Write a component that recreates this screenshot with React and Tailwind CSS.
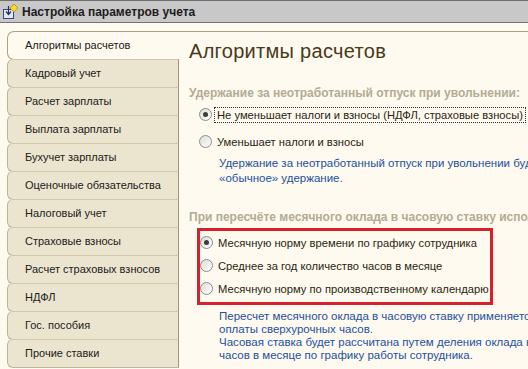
const TABS = [
  'Алгоритмы расчетов',
  'Кадровый учет',
  'Расчет зарплаты',
  'Выплата зарплаты',
  'Бухучет зарплаты',
  'Оценочные обязательства',
  'Налоговый учет',
  'Страховые взносы',
  'Расчет страховых взносов',
  'НДФЛ',
  'Гос. пособия',
  'Прочие ставки'
];

const Radio = ({ checked }) => (
  <span className="w-[13px] h-[13px] shrink-0 rounded-full border border-[#8c8c8c] bg-gradient-to-br from-[#dcdcd6] to-white flex items-center justify-center">
    {checked && <span className="w-[5px] h-[5px] rounded-full bg-[#3c3c3c]" />}
  </span>
);

const Option = ({ checked, focused, tall, children }) => (
  <div className={`flex items-center pl-[9px] ${tall ? 'h-[27px]' : 'h-[23px]'}`}>
    <Radio checked={checked} />
    <span
      className={`ml-[2px] pl-[2px] pr-[2px] text-[11.2px] leading-[14px] whitespace-nowrap text-[#2a2410] ${
        focused ? 'border border-dotted border-[#303030]' : 'border border-transparent'
      }`}
    >
      {children}
    </span>
  </div>
);

const TitleIcon = () => (
  <svg width="18" height="18" viewBox="0 0 18 18">
    <rect x="1.5" y="6.5" width="10" height="9" fill="#dfe8f4" stroke="#3a4a78" />
    <path d="M6.5 3v8M4 8.5l2.5 3 2.5-3" stroke="#20305a" strokeWidth="1.2" fill="none" />
    <path d="M12 1l4 4-4 4-4-4z" fill="#f8d830" stroke="#c89a10" />
  </svg>
);

export default function App() {
  const active = 0;
  return (
    <div className="w-[528px] h-[369px] overflow-hidden bg-[#fefaef] text-[12px] text-[#202020] font-['Liberation_Sans',Arial,sans-serif]">
      <div className="h-[23px] bg-[#c8c8c8] border-t border-[#6e6e6e] border-b border-b-[#737373] flex items-center pl-[2px] gap-[2px]">
        <TitleIcon />
        <span className="font-bold text-[12px] text-[#1c1c1c]">Настройка параметров учета</span>
      </div>

      <div className="flex">
        <div className="w-[179px] shrink-0 pt-[8px] pl-[7px] text-[11px]">
          {TABS.map((tab, i) => (
            <div
              key={tab}
              className={
                i === active
                  ? 'h-[29px] flex items-center pl-[17px] bg-[#fefaef] border border-[#aaa284] border-r-0 rounded-tl-[7px] rounded-bl-[7px]'
                  : 'h-[29px] flex items-center pl-[17px] bg-[#ebe5cf] border border-[#bcb496] border-r-[#9e9678] border-t-[#cfc8ac] rounded-tl-[6px] rounded-bl-[6px] -mt-px'
              }
            >
              {tab}
            </div>
          ))}
        </div>

        <div className="flex-1 mt-[8px] border-t border-[#aaa284] pl-[10px] overflow-hidden text-[11.5px]">
          <h1 className="mt-[7px] text-[20px] leading-[24px] text-[#47391a] tracking-[0.3px]">Алгоритмы расчетов</h1>

          <div className="mt-[23px] text-[12px] font-bold text-[#b3ab93] whitespace-nowrap leading-[14px]">
            Удержание за неотработанный отпуск при увольнении:
          </div>
          <div className="mt-[1px] pl-[1px]">
            <Option checked focused tall>Не уменьшает налоги и взносы (НДФЛ, страховые взносы)</Option>
            <Option tall>Уменьшает налоги и взносы</Option>
          </div>
          <div className="pl-[30px] mt-[1px] text-[#2450a0] leading-[15px] whitespace-nowrap">
            <div>Удержание за неотработанный отпуск при увольнении будет</div>
            <div>«обычное» удержание.</div>
          </div>

          <div className="mt-[24px] text-[12px] font-bold text-[#b3ab93] whitespace-nowrap leading-[14px]">
            При пересчёте месячного оклада в часовую ставку используется:
          </div>
          <div className="mt-[4px] ml-[8px] w-[296px] border-[3px] border-[#d6202c] pb-[2px]">
            <div className="-ml-[9px]">
              <Option checked>Месячную норму времени по графику сотрудника</Option>
              <Option>Среднее за год количество часов в месяце</Option>
              <Option>Месячную норму по производственному календарю</Option>
            </div>
          </div>
          <div className="pl-[30px] mt-[5px] text-[#2450a0] leading-[13px] whitespace-nowrap">
            <div>Пересчет месячного оклада в часовую ставку применяется для</div>
            <div>оплаты сверхурочных часов.</div>
            <div>Часовая ставка будет рассчитана путем деления оклада на количество</div>
            <div>часов в месяце по графику работы сотрудника.</div>
          </div>
        </div>
      </div>
    </div>
  );
}
